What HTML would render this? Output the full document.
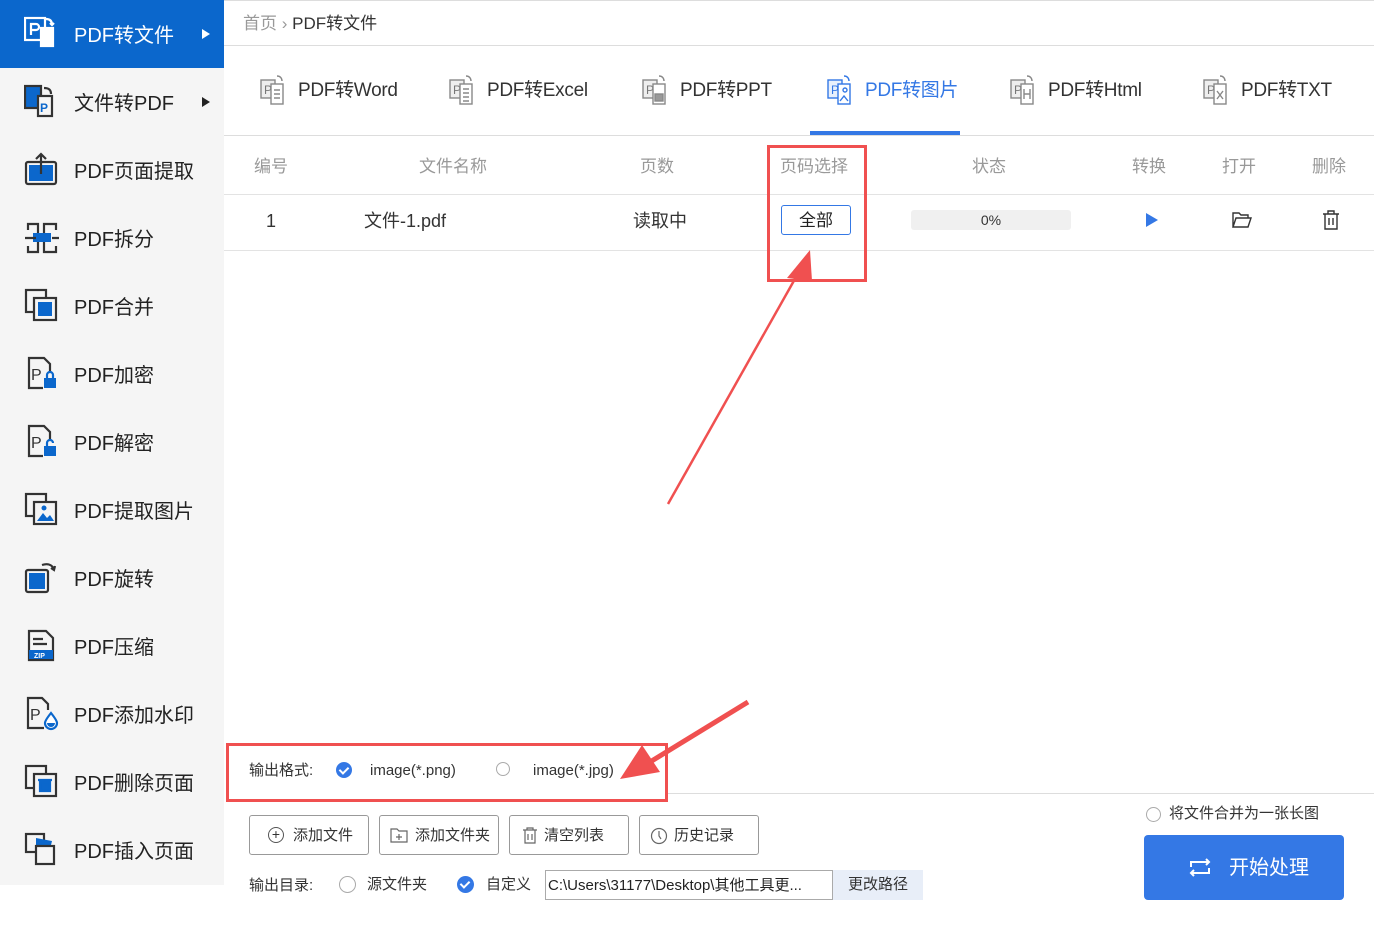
<!DOCTYPE html>
<html><head><meta charset="utf-8"><style>
*{margin:0;padding:0;box-sizing:border-box}
body{width:1374px;height:925px;background:#fff;font-family:"Liberation Sans","Noto Sans CJK SC",sans-serif;position:relative;overflow:hidden;color:#333}
.abs{position:absolute}
#side{left:0;top:0;width:224px;height:885px;background:#f5f5f5}
.it{position:absolute;left:0;width:224px;height:68px;font-size:20px;color:#222}
.it span{position:absolute;left:74px;top:23px;line-height:26px}
.it svg{position:absolute;left:24px;top:16px}
.it.act{background:#0b67cc;color:#fff}
.tri{position:absolute;left:202px;top:29px;width:0;height:0;border-left:8px solid #222;border-top:5px solid transparent;border-bottom:5px solid transparent}
.tab{position:absolute;top:78px;font-size:19px;color:#333;line-height:26px;letter-spacing:-0.3px}
.tab svg{position:absolute;left:-38px;top:-4px}
.th{position:absolute;top:156px;font-size:17px;color:#999;line-height:22px}
.btn{position:absolute;top:815px;height:40px;border:1px solid #999;border-radius:3px;font-size:15px;line-height:40px;color:#333;background:#fff}
.radio{position:absolute;width:16px;height:16px;border-radius:50%;border:1px solid #aaa;background:#fff}
.chk{position:absolute;width:16px;height:16px;border-radius:50%;background:#3478e5}
.chk:after{content:"";position:absolute;left:5px;top:3px;width:4px;height:7px;border:solid #fff;border-width:0 2px 2px 0;transform:rotate(45deg)}
.sm{font-size:15px;color:#333;position:absolute;line-height:20px}
</style></head><body>
<div id="side" class="abs">
 <div class="it act" style="top:0"><svg width="36" height="36" viewBox="0 0 36 36" fill="none" stroke="#fff" stroke-width="2.2"><rect x="1" y="2" width="20" height="22"/><path d="M7 19V8h5a3 3 0 0 1 0 6H7"/><rect x="17" y="12" width="12" height="18" fill="#fff"/><path d="M22 3c5 0 6 3 6 6M26 7l2 2 2-2"/></svg><span>PDF转文件</span><i class="tri" style="border-left-color:#fff"></i></div>
 <div class="it" style="top:68px"><svg width="36" height="36" viewBox="0 0 36 36" fill="none" stroke="#333" stroke-width="2.2"><rect x="1" y="2" width="16" height="22" fill="#0b67cc"/><rect x="14" y="12" width="14" height="20" fill="#f5f5f5"/><text x="16" y="28" font-size="12" fill="#0b67cc" stroke="none" font-weight="bold">P</text><path d="M20 4c5 0 7 2 7 6"/></svg><span>文件转PDF</span><i class="tri"></i></div>
 <div class="it" style="top:136px"><svg width="36" height="36" viewBox="0 0 36 36" fill="none" stroke="#333" stroke-width="2.2"><rect x="2" y="10" width="30" height="22" rx="2"/><rect x="5" y="13" width="24" height="16" fill="#0b67cc" stroke="none"/><path d="M17 22V2M12 7l5-5 5 5"/></svg><span>PDF页面提取</span></div>
 <div class="it" style="top:204px"><svg width="36" height="36" viewBox="0 0 36 36" fill="none" stroke="#333" stroke-width="2.2"><path d="M4 10V4h10v28H4v-6M32 10V4H20v28h12v-6"/><rect x="9" y="13" width="18" height="9" fill="#0b67cc" stroke="none"/><path d="M1 18h11M28 18h7"/></svg><span>PDF拆分</span></div>
 <div class="it" style="top:272px"><svg width="36" height="36" viewBox="0 0 36 36" fill="none" stroke="#333" stroke-width="2.2"><rect x="2" y="2" width="20" height="22"/><rect x="10" y="10" width="22" height="22" fill="#f5f5f5"/><rect x="14" y="14" width="14" height="14" fill="#0b67cc" stroke="none"/></svg><span>PDF合并</span></div>
 <div class="it" style="top:340px"><svg width="36" height="36" viewBox="0 0 36 36" fill="none" stroke="#333" stroke-width="2.2"><path d="M26 16V8l-6-6H5v30h14"/><text x="7" y="24" font-size="16" fill="#333" stroke="none">P</text><rect x="20" y="22" width="12" height="10" fill="#0b67cc" stroke="none"/><path d="M23 22v-3a3 3 0 0 1 6 0v3" stroke="#0b67cc"/></svg><span>PDF加密</span></div>
 <div class="it" style="top:408px"><svg width="36" height="36" viewBox="0 0 36 36" fill="none" stroke="#333" stroke-width="2.2"><path d="M26 16V8l-6-6H5v30h14"/><text x="7" y="24" font-size="16" fill="#333" stroke="none">P</text><rect x="20" y="22" width="12" height="10" fill="#0b67cc" stroke="none"/><path d="M23 22v-3a3 3 0 0 1 6 0" stroke="#0b67cc"/></svg><span>PDF解密</span></div>
 <div class="it" style="top:476px"><svg width="36" height="36" viewBox="0 0 36 36" fill="none" stroke="#333" stroke-width="2.2"><rect x="2" y="2" width="20" height="22"/><rect x="10" y="10" width="22" height="22" fill="#f5f5f5"/><path d="M13 29l6-8 4 5 3-3 4 6z" fill="#0b67cc" stroke="none"/><circle cx="20" cy="16" r="2.5" fill="#0b67cc" stroke="none"/></svg><span>PDF提取图片</span></div>
 <div class="it" style="top:544px"><svg width="36" height="36" viewBox="0 0 36 36" fill="none" stroke="#333" stroke-width="2.2"><rect x="2" y="10" width="22" height="22" rx="2"/><rect x="5" y="13" width="16" height="16" fill="#0b67cc" stroke="none"/><path d="M18 5c6-2 10 0 12 4M27 8l3 2 1-4"/></svg><span>PDF旋转</span></div>
 <div class="it" style="top:612px"><svg width="36" height="36" viewBox="0 0 36 36" fill="none" stroke="#333" stroke-width="2.2"><path d="M29 32V10l-7-7H5v29z"/><path d="M9 11h10M9 16h14"/><rect x="5" y="22" width="24" height="9" fill="#0b67cc" stroke="none"/><text x="10" y="30" font-size="7" fill="#fff" stroke="none" font-weight="bold">ZIP</text></svg><span>PDF压缩</span></div>
 <div class="it" style="top:680px"><svg width="36" height="36" viewBox="0 0 36 36" fill="none" stroke="#333" stroke-width="2.2"><path d="M24 14V8l-6-6H4v30h16"/><text x="6" y="24" font-size="16" fill="#333" stroke="none">P</text><path d="M27 17c-4 5-6 8-6 10a6 6 0 0 0 12 0c0-2-2-5-6-10z" fill="#fff" stroke="#0b67cc"/><path d="M23 27a4 4 0 0 0 8 0z" fill="#0b67cc" stroke="none"/></svg><span>PDF添加水印</span></div>
 <div class="it" style="top:748px"><svg width="36" height="36" viewBox="0 0 36 36" fill="none" stroke="#333" stroke-width="2.2"><rect x="2" y="2" width="20" height="22"/><rect x="10" y="10" width="22" height="22" fill="#f5f5f5"/><path d="M14 16h14M16 18h10v9H16z" stroke="#0b67cc" fill="#0b67cc"/></svg><span>PDF删除页面</span></div>
 <div class="it" style="top:816px"><svg width="36" height="36" viewBox="0 0 36 36" fill="none" stroke="#333" stroke-width="2.2"><rect x="2" y="2" width="18" height="18"/><path d="M12 6l16 3-2 8H12z" fill="#0b67cc" stroke="none"/><rect x="12" y="14" width="18" height="18" fill="#f5f5f5"/></svg><span>PDF插入页面</span></div>
</div>

<div class="abs" style="left:243px;top:13px;font-size:17px;color:#999;line-height:22px">首页 › <span style="color:#333">PDF转文件</span></div>
<div class="abs" style="left:224px;top:45px;width:1150px;height:1px;background:#ddd"></div>
<div class="abs" style="left:224px;top:0;width:1150px;height:1px;background:#ddd"></div>

<div class="tab" style="left:298px"><svg width="30" height="32" viewBox="0 0 30 32" fill="none" stroke="#888" stroke-width="1.4"><rect x="1" y="6" width="14" height="18" fill="#eee"/><text x="4" y="20" font-size="12" fill="#777" stroke="none">P</text><rect x="11" y="10" width="12" height="20" fill="#fff"/><path d="M14 16h6M14 20h6M14 24h6M17 2c3 0 5 2 5 5"/></svg>PDF转Word</div>
<div class="tab" style="left:487px"><svg width="30" height="32" viewBox="0 0 30 32" fill="none" stroke="#888" stroke-width="1.4"><rect x="1" y="6" width="14" height="18" fill="#eee"/><text x="4" y="20" font-size="12" fill="#777" stroke="none">P</text><rect x="11" y="10" width="12" height="20" fill="#fff"/><path d="M14 15h6M14 19h6M14 23h6M14 27h6M17 2c3 0 5 2 5 5"/></svg>PDF转Excel</div>
<div class="tab" style="left:680px"><svg width="30" height="32" viewBox="0 0 30 32" fill="none" stroke="#888" stroke-width="1.4"><rect x="1" y="6" width="14" height="18" fill="#eee"/><text x="4" y="20" font-size="12" fill="#777" stroke="none">P</text><rect x="11" y="10" width="12" height="20" fill="#fff"/><rect x="13" y="20" width="8" height="7" fill="#999"/><path d="M17 2c3 0 5 2 5 5"/></svg>PDF转PPT</div>
<div class="tab" style="left:865px;color:#3478e5"><svg width="30" height="32" viewBox="0 0 30 32" fill="none" stroke="#3478e5" stroke-width="1.4"><rect x="1" y="6" width="14" height="18" fill="#e8f0fc"/><text x="4" y="20" font-size="12" fill="#3478e5" stroke="none">P</text><rect x="11" y="10" width="12" height="20" fill="#fff"/><path d="M13 27l4-5 4 5M17 2c3 0 5 2 5 5"/><circle cx="18" cy="16" r="2"/></svg>PDF转图片</div>
<div class="tab" style="left:1048px"><svg width="30" height="32" viewBox="0 0 30 32" fill="none" stroke="#888" stroke-width="1.4"><rect x="1" y="6" width="14" height="18" fill="#eee"/><text x="4" y="20" font-size="12" fill="#777" stroke="none">P</text><rect x="11" y="10" width="12" height="20" fill="#fff"/><path d="M14 15v10M20 15v10M14 20h6M17 2c3 0 5 2 5 5"/></svg>PDF转Html</div>
<div class="tab" style="left:1241px"><svg width="30" height="32" viewBox="0 0 30 32" fill="none" stroke="#888" stroke-width="1.4"><rect x="1" y="6" width="14" height="18" fill="#eee"/><text x="4" y="20" font-size="12" fill="#777" stroke="none">P</text><rect x="11" y="10" width="12" height="20" fill="#fff"/><path d="M14 17l6 8M20 17l-6 8M17 2c3 0 5 2 5 5"/></svg>PDF转TXT</div>
<div class="abs" style="left:810px;top:131px;width:150px;height:4px;background:#3478e5"></div>
<div class="abs" style="left:224px;top:135px;width:1150px;height:1px;background:#ddd"></div>

<div class="th" style="left:254px">编号</div>
<div class="th" style="left:419px">文件名称</div>
<div class="th" style="left:640px">页数</div>
<div class="th" style="left:780px">页码选择</div>
<div class="th" style="left:972px">状态</div>
<div class="th" style="left:1132px">转换</div>
<div class="th" style="left:1222px">打开</div>
<div class="th" style="left:1312px">删除</div>
<div class="abs" style="left:224px;top:194px;width:1150px;height:1px;background:#e3e3e3"></div>
<div class="abs" style="left:224px;top:250px;width:1150px;height:1px;background:#e3e3e3"></div>

<div class="abs" style="left:266px;top:210px;font-size:18px;line-height:22px">1</div>
<div class="abs" style="left:364px;top:210px;font-size:18px;line-height:22px">文件-1.pdf</div>
<div class="abs" style="left:633px;top:210px;font-size:18px;line-height:22px">读取中</div>
<div class="abs" style="left:781px;top:205px;width:70px;height:30px;border:1px solid #3478e5;border-radius:3px;text-align:center;font-size:17px;line-height:30px;color:#222">全部</div>
<div class="abs" style="left:911px;top:210px;width:160px;height:20px;background:#f0f0f0;border-radius:3px;text-align:center;font-size:14px;line-height:21px;color:#333">0%</div>
<div class="abs" style="left:1146px;top:213px;width:0;height:0;border-left:12px solid #3478e5;border-top:7px solid transparent;border-bottom:7px solid transparent"></div>
<svg class="abs" style="left:1232px;top:211px" width="20" height="18" viewBox="0 0 20 18" fill="none" stroke="#333" stroke-width="1.4"><path d="M1 16V2h6l2 2h7v3M1 16l3-9h15l-3 9z"/></svg>
<svg class="abs" style="left:1322px;top:210px" width="18" height="20" viewBox="0 0 18 20" fill="none" stroke="#333" stroke-width="1.4"><path d="M1 4h16M6 4V1h6v3M3 4v15h12V4M7 8v7M11 8v7"/></svg>

<div class="abs" style="left:767px;top:145px;width:100px;height:137px;border:3px solid #f05050"></div>
<div class="abs" style="left:226px;top:743px;width:442px;height:59px;border:3px solid #f05050"></div>
<svg class="abs" style="left:0;top:0" width="1374" height="925" viewBox="0 0 1374 925">
<path d="M668 504L800 270" stroke="#f05050" stroke-width="2.5"/>
<path d="M810 250L787 278L812 281z" fill="#f05050"/>
<path d="M748 702L650 762" stroke="#f05050" stroke-width="5"/>
<path d="M620 779L642 745L660 772z" fill="#f05050"/>
</svg>

<div class="sm" style="left:249px;top:761px">输出格式:</div>
<div class="chk" style="left:336px;top:762px"></div>
<div class="sm" style="left:370px;top:761px">image(*.png)</div>
<div class="radio" style="left:496px;top:762px;width:14px;height:14px"></div>
<div class="sm" style="left:533px;top:761px">image(*.jpg)</div>
<div class="abs" style="left:668px;top:793px;width:706px;height:1px;background:#ddd"></div>

<div class="btn" style="left:249px;width:120px"><span style="position:absolute;left:18px;top:11px;width:16px;height:16px;border:1px solid #555;border-radius:50%;font-size:14px;line-height:13px;text-align:center">+</span><span style="position:absolute;left:43px">添加文件</span></div>
<div class="btn" style="left:379px;width:120px"><svg style="position:absolute;left:10px;top:12px" width="18" height="15" viewBox="0 0 18 15" fill="none" stroke="#666" stroke-width="1.2"><path d="M1 14V1h6l2 2h8v11zM9 6v6M6 9h6"/></svg><span style="position:absolute;left:35px">添加文件夹</span></div>
<div class="btn" style="left:509px;width:120px"><svg style="position:absolute;left:12px;top:11px" width="16" height="17" viewBox="0 0 16 17" fill="none" stroke="#666" stroke-width="1.2"><path d="M1 3h14M5 3V1h6v2M3 3v13h10V3M6 7v6M10 7v6"/></svg><span style="position:absolute;left:34px">清空列表</span></div>
<div class="btn" style="left:639px;width:120px"><svg style="position:absolute;left:10px;top:11px" width="18" height="18" viewBox="0 0 18 18" fill="none" stroke="#666" stroke-width="1.2"><circle cx="9" cy="9" r="7.5"/><path d="M9 4v5l2 3"/></svg><span style="position:absolute;left:34px">历史记录</span></div>

<div class="sm" style="left:249px;top:876px">输出目录:</div>
<div class="radio" style="left:339px;top:876px;width:17px;height:17px"></div>
<div class="sm" style="left:367px;top:875px">源文件夹</div>
<div class="chk" style="left:457px;top:876px;width:17px;height:17px"></div>
<div class="sm" style="left:486px;top:875px">自定义</div>
<div class="abs" style="left:545px;top:870px;width:288px;height:30px;border:1px solid #aaa;font-size:15px;line-height:29px;padding-left:2px;color:#222;white-space:nowrap;overflow:hidden">C:\Users\31177\Desktop\其他工具更...</div>
<div class="abs" style="left:833px;top:870px;width:90px;height:30px;background:#e8eef8;font-size:15px;line-height:30px;text-align:center;color:#333">更改路径</div>

<div class="radio" style="left:1146px;top:807px;width:15px;height:15px"></div>
<div class="sm" style="left:1169px;top:804px">将文件合并为一张长图</div>
<div class="abs" style="left:1144px;top:835px;width:200px;height:65px;background:#3478e5;border-radius:4px;color:#fff;font-size:20px">
<svg style="position:absolute;left:44px;top:22px" width="24" height="21" viewBox="0 0 24 21" fill="none" stroke="#fff" stroke-width="2"><path d="M3 10V5h18M18 2l3 3-3 3M21 11v5H3M6 13l-3 3 3 3"/></svg>
<span style="position:absolute;left:85px;top:20px;line-height:26px">开始处理</span></div>
</body></html>
